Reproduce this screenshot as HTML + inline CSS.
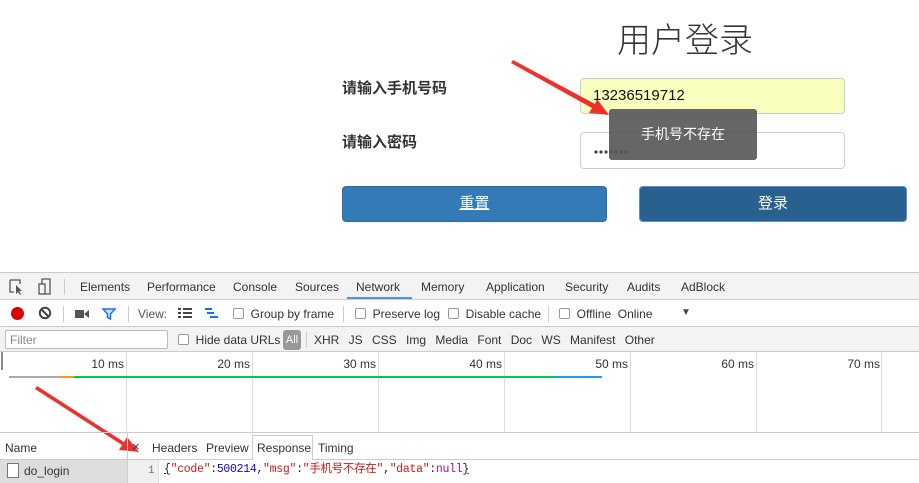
<!DOCTYPE html>
<html><head><meta charset="utf-8"><style>
*{margin:0;padding:0;box-sizing:border-box}
body{width:919px;height:483px;overflow:hidden;background:#fff;position:relative;font-family:"Liberation Sans","Noto Sans CJK SC",sans-serif;color:#333}
.a{position:absolute;white-space:nowrap}
.dt{font-family:"Liberation Sans","Noto Sans CJK SC",sans-serif;font-size:12px;color:#333}
.cb{display:inline-block;width:11px;height:11px;border:1px solid #999;border-radius:2px;background:#fff;vertical-align:-1px}
.vl{position:absolute;width:1px;background:#ccc}
</style></head><body>
<div class="a" style="left:617px;top:16px;font-size:34px;color:#333;font-family:'Noto Sans CJK SC',sans-serif;font-weight:300;line-height:44px">用户登录</div>
<div class="a" style="left:342px;top:79px;font-size:15px;font-weight:bold;line-height:20px">请输入手机号码</div>
<div class="a" style="left:342px;top:133px;font-size:15px;font-weight:bold;line-height:20px">请输入密码</div>
<div class="a" style="left:580px;top:78px;width:265px;height:36px;background:#faffbd;border:1px solid #ccc;border-radius:4px;font-size:15px;padding:8px 12px;color:#111">13236519712</div>
<div class="a" style="left:580px;top:132px;width:265px;height:37px;background:#fff;border:1px solid #ccc;border-radius:4px;padding:7px 12px"><svg width="50" height="20" style="position:absolute;left:12px;top:9px"><g fill="#444"><circle cx="3" cy="10" r="1.6"/><circle cx="8" cy="10" r="1.6"/><circle cx="13" cy="10" r="1.6"/><circle cx="18" cy="10" r="1.6"/><circle cx="23" cy="10" r="1.6"/><circle cx="28" cy="10" r="1.6"/><circle cx="33" cy="10" r="1.6"/></g></svg></div>
<div class="a" style="left:342px;top:186px;width:265px;height:36px;background:#337ab7;border:1px solid #2e6da4;border-radius:4px;color:#fff;font-size:15px;text-align:center;line-height:34px;text-decoration:underline">重置</div>
<div class="a" style="left:639px;top:186px;width:268px;height:36px;background:#286090;border:1px solid #5b8fd0;border-radius:4px;color:#fff;font-size:15px;text-align:center;line-height:34px">登录</div>
<div class="a" style="left:609px;top:109px;width:148px;height:51px;background:rgba(85,85,85,.9);border-radius:3px;color:#fff;font-size:14px;text-align:center;line-height:51px">手机号不存在</div>
<svg class="a" style="left:0;top:0" width="919" height="483">
<polygon points="513,60 595,104 597,99 609,115 589,113 592,108 511,63" fill="#f0302a"/>
<polygon points="37,386 124,442 127,437 139,452 119,450 122,445 35,389" fill="#f0302a"/>
</svg>
<div class="a" style="left:0;top:272px;width:919px;height:211px;border-top:1px solid #ccc"></div>
<div class="a dt" style="left:0;top:273px;width:919px;height:27px;background:#f3f3f3;border-bottom:1px solid #ccc"></div>
<svg class="a" style="left:8px;top:278px" width="50" height="18"><path d="M2 2h10v4M2 2v12h4" stroke="#555" fill="none" stroke-width="1.3"/><path d="M8 7l6 6-3 0 2 3-1 1-2-3-2 2z" fill="#555"/><rect x="31" y="6" width="6" height="10" stroke="#555" fill="none" stroke-width="1.3"/><path d="M34 6V1h8v15h-5" stroke="#555" fill="none" stroke-width="1.3"/></svg>
<div class="vl" style="left:64px;top:279px;height:16px"></div>
<div class="a dt" style="left:80px;top:279px;line-height:16px">Elements</div>
<div class="a dt" style="left:147px;top:279px;line-height:16px">Performance</div>
<div class="a dt" style="left:233px;top:279px;line-height:16px">Console</div>
<div class="a dt" style="left:295px;top:279px;line-height:16px">Sources</div>
<div class="a dt" style="left:356px;top:279px;line-height:16px">Network</div>
<div class="a" style="left:347px;top:297px;width:65px;height:2px;background:#4d90fe"></div>
<div class="a dt" style="left:421px;top:279px;line-height:16px">Memory</div>
<div class="a dt" style="left:486px;top:279px;line-height:16px">Application</div>
<div class="a dt" style="left:565px;top:279px;line-height:16px">Security</div>
<div class="a dt" style="left:627px;top:279px;line-height:16px">Audits</div>
<div class="a dt" style="left:681px;top:279px;line-height:16px">AdBlock</div>
<div class="a" style="left:0;top:300px;width:919px;height:27px;background:#fff;border-bottom:1px solid #ccc"></div>
<div class="a" style="left:11px;top:307px;width:13px;height:13px;border-radius:50%;background:#d00"></div>
<svg class="a" style="left:38px;top:306px" width="14" height="14"><circle cx="7" cy="7" r="5.2" stroke="#444" stroke-width="2" fill="none"/><path d="M3.5 3.5l7 7" stroke="#444" stroke-width="2"/></svg>
<div class="vl" style="left:63px;top:306px;height:16px"></div>
<svg class="a" style="left:75px;top:307px" width="50" height="14"><rect x="0" y="3" width="9" height="8" fill="#555"/><path d="M9 7l5-4v8z" fill="#555"/><path d="M28 2h12l-4.5 5v5l-3-1.5V7z" stroke="#1a73e8" stroke-width="1.5" fill="#cfe0fb"/></svg>
<div class="vl" style="left:128px;top:306px;height:16px"></div>
<div class="a dt" style="left:138px;top:306px;line-height:16px;color:#555">View:</div>
<svg class="a" style="left:178px;top:307px" width="46" height="14"><path d="M0 2h3M5 2h9M0 6h3M5 6h9M0 10h3M5 10h9" stroke="#444" stroke-width="2"/><path d="M27 2h7M29 6h7M32 10h8" stroke="#1a73e8" stroke-width="2"/></svg>
<div class="a dt" style="left:233px;top:306px;line-height:16px"><span class="cb"></span>&nbsp; Group by frame</div>
<div class="vl" style="left:343px;top:306px;height:16px"></div>
<div class="a dt" style="left:355px;top:306px;line-height:16px"><span class="cb"></span>&nbsp; Preserve log</div>
<div class="a dt" style="left:448px;top:306px;line-height:16px"><span class="cb"></span>&nbsp; Disable cache</div>
<div class="vl" style="left:548px;top:306px;height:16px"></div>
<div class="a dt" style="left:559px;top:306px;line-height:16px"><span class="cb"></span>&nbsp; Offline&nbsp; Online</div>
<div class="a" style="left:681px;top:307px;font-size:10px;color:#444">▼</div>
<div class="a" style="left:0;top:327px;width:919px;height:25px;background:#f3f3f3;border-bottom:1px solid #ccc"></div>
<div class="a dt" style="left:5px;top:330px;width:163px;height:19px;background:#fff;border:1px solid #bbb;border-radius:2px;padding:2px 4px;color:#888">Filter</div>
<div class="a dt" style="left:178px;top:332px;line-height:16px"><span class="cb"></span>&nbsp; Hide data URLs</div>
<div class="a dt" style="left:283px;top:330px;width:18px;height:20px;background:#999;color:#fff;border-radius:3px;text-align:center;line-height:20px;font-size:11px">All</div>
<div class="vl" style="left:306px;top:332px;height:16px"></div>
<div class="a dt" style="left:314px;top:332px;line-height:16px;word-spacing:6px">XHR JS CSS Img Media Font Doc WS Manifest Other</div>
<div class="a" style="left:0;top:352px;width:919px;height:81px;border-bottom:1px solid #ccc"></div>
<div class="a" style="left:1px;top:352px;width:2px;height:18px;background:#888"></div>
<div class="vl" style="left:126px;top:352px;height:80px;background:#ddd"></div>
<div class="vl" style="left:252px;top:352px;height:80px;background:#ddd"></div>
<div class="vl" style="left:378px;top:352px;height:80px;background:#ddd"></div>
<div class="vl" style="left:504px;top:352px;height:80px;background:#ddd"></div>
<div class="vl" style="left:630px;top:352px;height:80px;background:#ddd"></div>
<div class="vl" style="left:756px;top:352px;height:80px;background:#ddd"></div>
<div class="vl" style="left:881px;top:352px;height:80px;background:#ddd"></div>
<div class="a dt" style="left:73px;top:357px;width:51px;text-align:right">10 ms</div>
<div class="a dt" style="left:199px;top:357px;width:51px;text-align:right">20 ms</div>
<div class="a dt" style="left:325px;top:357px;width:51px;text-align:right">30 ms</div>
<div class="a dt" style="left:451px;top:357px;width:51px;text-align:right">40 ms</div>
<div class="a dt" style="left:577px;top:357px;width:51px;text-align:right">50 ms</div>
<div class="a dt" style="left:703px;top:357px;width:51px;text-align:right">60 ms</div>
<div class="a dt" style="left:829px;top:357px;width:51px;text-align:right">70 ms</div>
<div class="a" style="left:9px;top:376px;width:51px;height:2px;background:#aaa"></div>
<div class="a" style="left:60px;top:376px;width:14px;height:2px;background:#f90"></div>
<div class="a" style="left:74px;top:376px;width:481px;height:2px;background:#0c4"></div>
<div class="a" style="left:555px;top:376px;width:47px;height:2px;background:#1a9cf0"></div>
<div class="vl" style="left:127px;top:433px;height:50px"></div>
<div class="a" style="left:0;top:459px;width:919px;height:1px;background:#ccc"></div>
<div class="a dt" style="left:5px;top:440px;line-height:16px">Name</div>
<div class="a" style="left:0;top:460px;width:127px;height:23px;background:#ddd"></div>
<div class="a" style="left:7px;top:463px;width:12px;height:15px;background:#fff;border:1px solid #777"></div>
<div class="a dt" style="left:24px;top:463px;line-height:16px">do_login</div>
<div class="a dt" style="left:132px;top:439px;font-size:13px">×</div>
<div class="a dt" style="left:152px;top:440px;line-height:16px">Headers</div>
<div class="a dt" style="left:206px;top:440px;line-height:16px">Preview</div>
<div class="a" style="left:252px;top:435px;width:61px;height:25px;border:1px solid #ccc;border-bottom:none;background:#fff"></div>
<div class="a dt" style="left:257px;top:440px;line-height:16px">Response</div>
<div class="a dt" style="left:318px;top:440px;line-height:16px">Timing</div>
<div class="a" style="left:128px;top:460px;width:31px;height:23px;background:#f0f0f0;border-right:1px solid #ddd"></div>
<div class="a" style="left:148px;top:463px;font-family:'Liberation Mono',monospace;font-size:11px;color:#777;line-height:16px">1</div>
<div class="a" style="left:164px;top:462px;font-family:'Liberation Mono','Noto Sans CJK SC',monospace;font-size:11.5px;line-height:16px;color:#222;letter-spacing:-0.3px"><u>{</u><span style="color:#c41a16">"code"</span>:<span style="color:#1c00cf">500214</span>,<span style="color:#c41a16">"msg"</span>:<span style="color:#c41a16">"手机号不存在"</span>,<span style="color:#c41a16">"data"</span>:<span style="color:#aa0d91">null</span><u>}</u></div>
</body></html>
